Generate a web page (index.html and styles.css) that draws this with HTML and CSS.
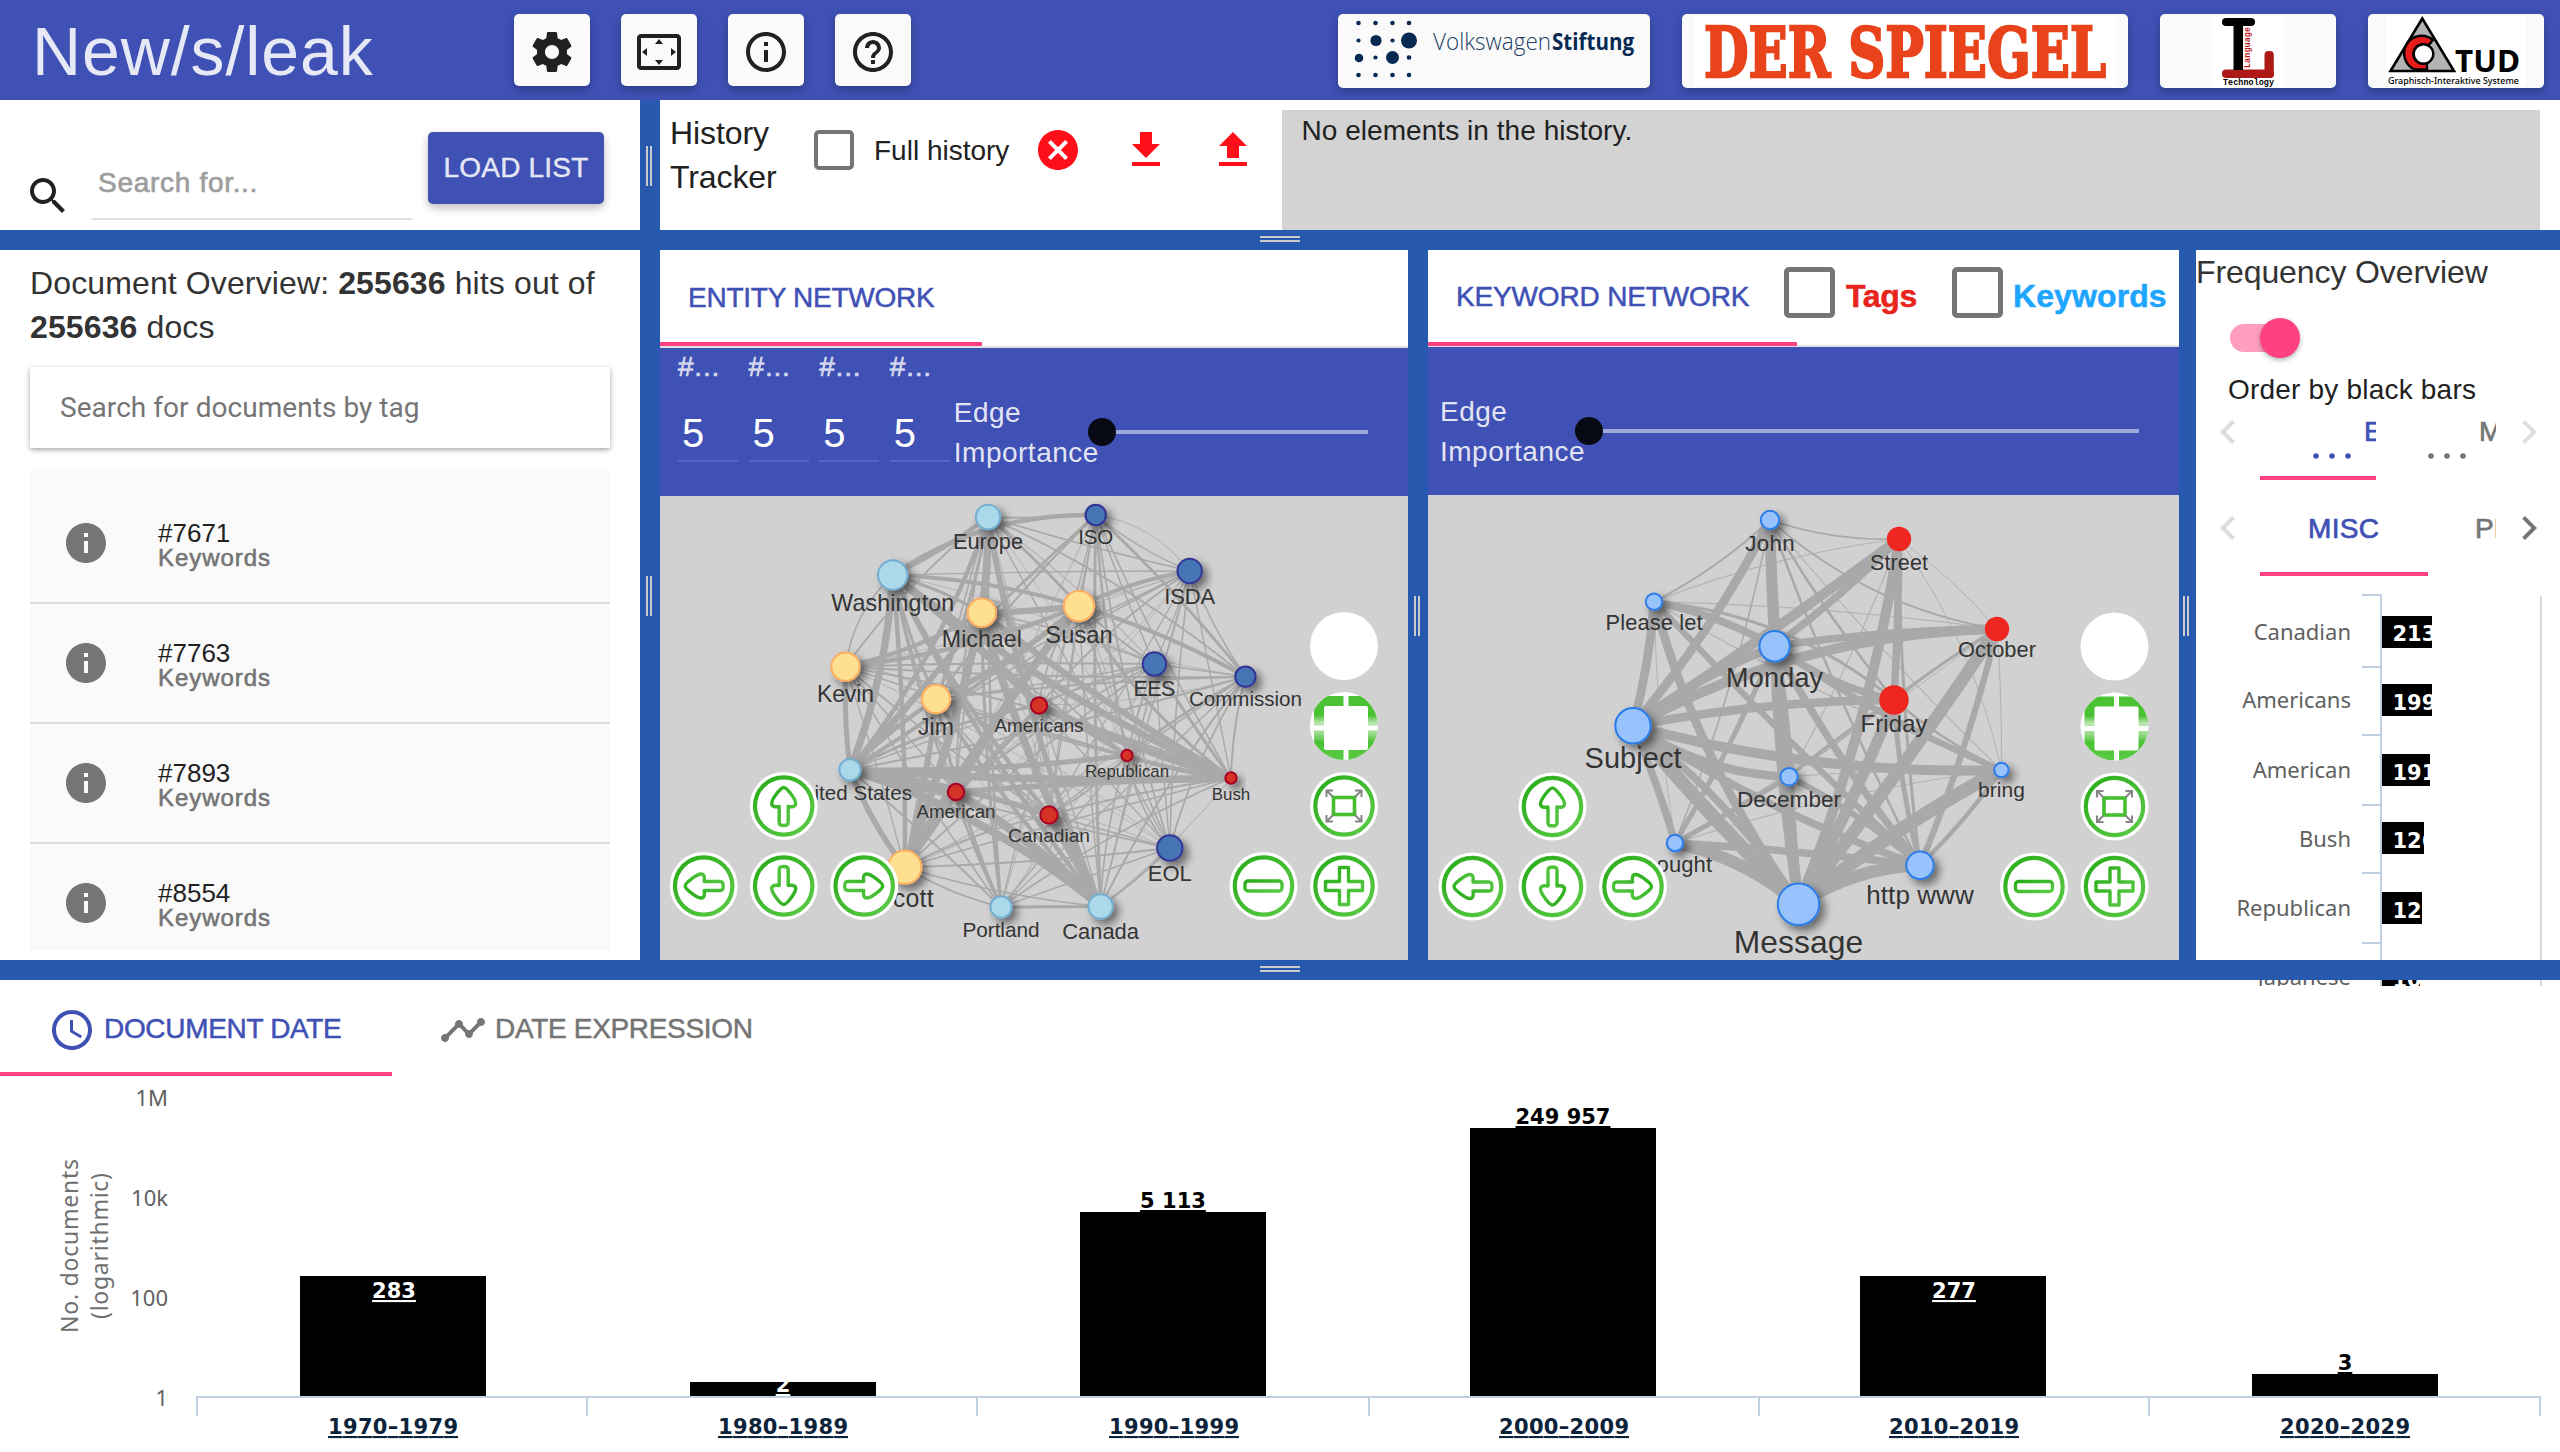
FILE: index.html
```html
<!DOCTYPE html>
<html lang="en">
<head>
<meta charset="utf-8">
<title>New/s/leak</title>
<link rel="stylesheet" href="styles.css">
</head>
<body>
<svg class="sprite" aria-hidden="true">
  <defs>
    <linearGradient id="green" x1="0" y1="0" x2="1" y2="1"><stop offset="0" stop-color="#28ac18"/><stop offset="1" stop-color="#5ccb48"/></linearGradient>
    <linearGradient id="greenFade" x1="0" y1="0" x2="0" y2="1"><stop offset="0" stop-color="#4cc235"/><stop offset="0.3" stop-color="#49c132"/><stop offset="0.42" stop-color="#b9e6b0"/><stop offset="0.58" stop-color="#9ddc90"/><stop offset="0.72" stop-color="#49c132"/><stop offset="1" stop-color="#5ccb48"/></linearGradient>
    <clipPath id="disc"><circle r="34"/></clipPath>
    <filter id="shadow" x="-60%" y="-60%" width="240%" height="240%"><feDropShadow dx="5" dy="5" stdDeviation="4" flood-color="#000" flood-opacity="0.5"/></filter>
    <g id="ring"><circle r="34" fill="#fff"/><circle r="28.7" fill="#fff" stroke="url(#green)" stroke-width="4.2"/></g>
    <path id="arrow" d="M0-18.5C3-18.5 12-7 12-2.500C12 1 8 1 4.500 0.500V16.500Q4.500 19.500 0 19.500T-4.500 16.500V0.500C-8 1-12 1-12-2.500C-12-7-3-18.500 0-18.500Z" fill="#fff" stroke="url(#green)" stroke-width="3.4" stroke-linejoin="round"/>
    <g id="navUp"><use href="#ring"/><use href="#arrow"/></g>
    <g id="navDown"><use href="#ring"/><use href="#arrow" transform="rotate(180)"/></g>
    <g id="navLeft"><use href="#ring"/><use href="#arrow" transform="rotate(-90)"/></g>
    <g id="navRight"><use href="#ring"/><use href="#arrow" transform="rotate(90)"/></g>
    <g id="navMinus"><use href="#ring"/><rect x="-18.500" y="-5" width="37" height="10" rx="3" fill="#fff" stroke="url(#green)" stroke-width="3.4"/></g>
    <g id="navPlus"><use href="#ring"/><path d="M-4.500-18.500H4.500V-4.500H18.500V4.500H4.500V18.500H-4.500V4.500H-18.500V-4.500H-4.500Z" fill="#fff" stroke="url(#green)" stroke-width="3.400" stroke-linejoin="round"/></g>
    <g id="navFit"><use href="#ring"/><rect x="-10.500" y="-8.500" width="21" height="17" fill="none" stroke="#45bf30" stroke-width="3.600"/><path d="M-11-9L-17-15M-17.500-9V-15.500H-11M11-9L17-15M17.500-9V-15.500H11M-11 9L-17 15M-17.500 9V15.500H-11M11 9L17 15M17.500 9V15.500H11" fill="none" stroke="#858585" stroke-width="2"/></g>
    <g id="navFrame"><circle r="34" fill="#fff"/><g clip-path="url(#disc)"><rect x="-30" y="-30" width="64" height="64" fill="url(#greenFade)"/><rect x="-20" y="-20" width="44" height="44" rx="2" fill="#fff"/><path d="M2-34V36M-34 2H36" stroke="#fff" stroke-width="5"/></g></g>
    <path id="icInfo" d="M12 2C6.480 2 2 6.480 2 12s4.480 10 10 10 10-4.480 10-10S17.520 2 12 2zm1 15h-2v-6h2v6zm0-8h-2V7h2v2z"/>
    <path id="icLeft" d="M15.410 7.410L14 6l-6 6 6 6 1.410-1.410L10.830 12z"/>
    <path id="icRight" d="M10 6L8.590 7.410 13.170 12l-4.580 4.590L10 18l6-6z"/>
  </defs>
</svg>

<div class="app">
  <header class="topbar">
    <h1 class="brand">New/s/leak</h1>
    <nav class="tools">
      <button class="tool"><svg class="icon" viewBox="0 0 24 24"><path d="M19.430 12.980c.04-.32.07-.64.07-.98s-.03-.66-.07-.98l2.110-1.650c.19-.15.24-.42.12-.64l-2-3.460c-.12-.22-.39-.3-.61-.22l-2.490 1c-.52-.4-1.080-.73-1.690-.98l-.38-2.650C14.460 2.180 14.250 2 14 2h-4c-.25 0-.46.18-.49.42l-.38 2.650c-.61.25-1.170.59-1.690.98l-2.490-1c-.23-.09-.49 0-.61.22l-2 3.460c-.13.22-.07.49.12.64l2.110 1.650c-.04.32-.07.65-.07.98s.03.66.07.98l-2.110 1.650c-.19.15-.24.42-.12.64l2 3.460c.12.22.39.3.61.22l2.490-1c.52.4 1.080.73 1.690.98l.38 2.650c.03.24.24.42.49.42h4c.25 0 .46-.18.49-.42l.38-2.650c.61-.25 1.170-.59 1.690-.98l2.490 1c.23.09.49 0 .61-.22l2-3.460c.12-.22.07-.49-.12-.64l-2.110-1.650zM12 15.500c-1.930 0-3.500-1.570-3.500-3.500s1.570-3.500 3.500-3.500 3.500 1.570 3.500 3.500-1.570 3.500-3.500 3.500z"/></svg></button>
      <button class="tool"><svg class="icon" viewBox="0 0 24 24"><path d="M12.010 5.500L10 8h4l-1.990-2.500zM18 10v4l2.500-1.990L18 10zM6 10l-2.500 2.010L6 14v-4zm8 6h-4l2.010 2.500L14 16zm7-13H3c-1.100 0-2 .9-2 2v14c0 1.100.9 2 2 2h18c1.100 0 2-.9 2-2V5c0-1.100-.9-2-2-2zm0 16.010H3V4.990h18v14.020z"/></svg></button>
      <button class="tool"><svg class="icon" viewBox="0 0 24 24"><path d="M11 17h2v-6h-2v6zm1-15C6.480 2 2 6.480 2 12s4.480 10 10 10 10-4.480 10-10S17.520 2 12 2zm0 18c-4.410 0-8-3.590-8-8s3.590-8 8-8 8 3.590 8 8-3.590 8-8 8zM11 9h2V7h-2v2z"/></svg></button>
      <button class="tool"><svg class="icon" viewBox="0 0 24 24"><path d="M11 18h2v-2h-2v2zm1-16C6.480 2 2 6.480 2 12s4.480 10 10 10 10-4.480 10-10S17.520 2 12 2zm0 18c-4.410 0-8-3.590-8-8s3.590-8 8-8 8 3.590 8 8-3.590 8-8 8zm0-14c-2.210 0-4 1.790-4 4h2c0-1.100.9-2 2-2s2 .9 2 2c0 2-3 1.750-3 5h2c0-2.250 3-2.500 3-5 0-2.210-1.790-4-4-4z"/></svg></button>
    </nav>
    <div class="sponsors">
      <svg class="sponsor" width="312" height="74" viewBox="1338 14 312 74">
        <g fill="#062a52"><circle cx="1358.500" cy="23" r="2.300"/><circle cx="1375.500" cy="23" r="2.300"/><circle cx="1392.500" cy="23" r="2.300"/><circle cx="1409" cy="23" r="2.300"/><circle cx="1358.500" cy="40.500" r="2.100"/><circle cx="1376" cy="40.500" r="5.600"/><circle cx="1392.500" cy="40.500" r="2.100"/><circle cx="1409" cy="40.500" r="8"/><circle cx="1359" cy="58" r="4.300"/><circle cx="1375.500" cy="57.500" r="2.100"/><circle cx="1392.500" cy="57.500" r="6.500"/><circle cx="1409" cy="57.500" r="2.300"/><circle cx="1358.500" cy="75" r="2.300"/><circle cx="1375.500" cy="75" r="2.300"/><circle cx="1392.500" cy="75" r="2.300"/><circle cx="1409" cy="75" r="2.300"/></g>
        <text class="vw" x="1433" y="49.500" textLength="118" lengthAdjust="spacingAndGlyphs">Volkswagen</text>
        <text class="vw vw-bold" x="1552" y="49.500" textLength="82" lengthAdjust="spacingAndGlyphs">Stiftung</text>
      </svg>
      <svg class="sponsor" width="446" height="74" viewBox="1682 14 446 74"><rect x="1694" y="16" width="422" height="70" fill="#fff"/><text class="spiegel" x="1704" y="76.500" textLength="402" lengthAdjust="spacingAndGlyphs">DER SPIEGEL</text></svg>
      <svg class="sponsor" width="176" height="74" viewBox="2160 14 176 74">
        <rect x="2212" y="16" width="72" height="72" fill="#fff"/>
        <rect x="2222" y="69.500" width="52" height="8.500" rx="4" fill="#ae1a16"/><rect x="2264.500" y="51" width="9.300" height="27" rx="4" fill="#ae1a16"/>
        <rect x="2222" y="18" width="33" height="8" rx="4" fill="#000"/><rect x="2233.500" y="20" width="9.500" height="50" fill="#000"/>
        <text class="lt" x="2223" y="84.500" textLength="51">Technology</text>
        <text class="lt lt-red" transform="translate(2249.500 68) rotate(-90)" textLength="41">Language</text>
      </svg>
      <svg class="sponsor" width="176" height="74" viewBox="2368 14 176 74">
        <rect x="2386" y="16" width="140" height="70" fill="#fff"/>
        <path d="M2422.300 18.500L2390.500 71H2454Z" fill="#b3b3b3" stroke="#000" stroke-width="2.600"/>
        <path d="M2433 40A17.500 17.500 0 1 0 2415 69.500H2427V62.500A9.500 9.500 0 1 1 2428 46Z" fill="#e81b1b" stroke="#000" stroke-width="2.400"/>
        <circle cx="2423.500" cy="54" r="9.800" fill="#fff" stroke="#000" stroke-width="2.400"/>
        <text class="tud" x="2455" y="72" textLength="65" lengthAdjust="spacingAndGlyphs">TUD</text>
        <text class="tud-sub" x="2388" y="83.500" textLength="131" lengthAdjust="spacingAndGlyphs">Graphisch-Interaktive Systeme</text>
      </svg>
    </div>
  </header>

  <div class="row row-search">
    <section class="search">
      <svg class="icon search-icon" viewBox="0 0 24 24"><path d="M15.500 14h-.79l-.28-.27C15.410 12.590 16 11.110 16 9.500 16 5.910 13.090 3 9.500 3S3 5.910 3 9.500 5.910 16 9.500 16c1.610 0 3.090-.59 4.230-1.570l.27.28v.79l5 4.990L20.490 19l-4.990-5zm-6 0C7.010 14 5 11.990 5 9.500S7.010 5 9.500 5 14 7.010 14 9.500 11.990 14 9.500 14z"/></svg>
      <div class="search-field">Search for...</div>
      <button class="load">LOAD LIST</button>
    </section>
    <div class="split-v"><i class="grip-v"></i></div>
    <section class="history">
      <h2 class="history-title">History Tracker</h2>
      <span class="checkbox"></span>
      <span class="history-label">Full history</span>
      <svg class="icon red" viewBox="0 0 24 24"><path d="M12 2C6.470 2 2 6.470 2 12s4.470 10 10 10 10-4.470 10-10S17.530 2 12 2zm5 13.590L15.590 17 12 13.410 8.410 17 7 15.590 10.590 12 7 8.410 8.410 7 12 10.590 15.590 7 17 8.410 13.410 12 17 15.590z"/></svg>
      <svg class="icon red" viewBox="0 0 24 24"><path d="M19 9h-4V3H9v6H5l7 7 7-7zM5 18v2h14v-2H5z"/></svg>
      <svg class="icon red" viewBox="0 0 24 24"><path d="M9 16h6v-6h4l-7-7-7 7h4zm-4 2h14v2H5z"/></svg>
      <div class="history-list">No elements in the history.</div>
    </section>
  </div>

  <div class="split-h"><i class="grip-h"></i></div>

  <div class="row row-main">
    <section class="docs">
      <h2 class="docs-title">Document Overview: <b>255636</b> hits out of <b>255636</b> docs</h2>
      <div class="tag-search">Search for documents by tag</div>
      <ul class="doc-list">
        <li><svg class="icon" viewBox="0 0 24 24"><use href="#icInfo"/></svg><div><p>#7671</p><small>Keywords</small></div></li>
        <li><svg class="icon" viewBox="0 0 24 24"><use href="#icInfo"/></svg><div><p>#7763</p><small>Keywords</small></div></li>
        <li><svg class="icon" viewBox="0 0 24 24"><use href="#icInfo"/></svg><div><p>#7893</p><small>Keywords</small></div></li>
        <li><svg class="icon" viewBox="0 0 24 24"><use href="#icInfo"/></svg><div><p>#8554</p><small>Keywords</small></div></li>
      </ul>
    </section>
    <div class="split-v split-docs"><i class="grip-v"></i></div>

    <section class="network">
      <div class="net-tabs"><div class="net-tab tab-entity">ENTITY NETWORK</div></div>
      <div class="net-bar">
        <div class="count"><label>#...</label><span>5</span></div>
        <div class="count"><label>#...</label><span>5</span></div>
        <div class="count"><label>#...</label><span>5</span></div>
        <div class="count"><label>#...</label><span>5</span></div>
        <div class="edge-label">Edge Importance</div>
        <div class="slider slider-entity"><i></i></div>
      </div>
      <svg class="graph" id="entityGraph" viewBox="660 496 748 464"></svg>
    </section>
    <div class="split-v split-net"><i class="grip-v"></i></div>

    <section class="network keyword">
      <div class="net-tabs">
        <div class="net-tab tab-keyword">KEYWORD NETWORK</div>
        <span class="checkbox big first"></span><b class="tags">Tags</b>
        <span class="checkbox big second"></span><b class="keywords">Keywords</b>
      </div>
      <div class="net-bar">
        <div class="edge-label edge-keyword">Edge Importance</div>
        <div class="slider slider-keyword"><i></i></div>
      </div>
      <svg class="graph" id="keywordGraph" viewBox="1428 495 751 465"></svg>
    </section>
    <div class="split-v split-freq"><i class="grip-v"></i></div>

    <section class="freq">
      <h2 class="freq-title">Frequency Overview</h2>
      <div class="toggle"><i></i></div>
      <div class="toggle-label">Order by black bars</div>
      <div class="pager">
        <svg class="icon faint" viewBox="0 0 24 24"><use href="#icLeft"/></svg>
        <svg class="pager-tabs" width="236" height="80" viewBox="2260 400 236 80">
          <text class="tab-on" x="2364" y="441">E</text><text class="tab-off" x="2479" y="441">M</text>
          <rect x="2376" y="415" width="10" height="30" fill="#fff"/>
          <g fill="#3f51b5"><circle cx="2316" cy="456" r="2.800"/><circle cx="2332" cy="456" r="2.800"/><circle cx="2348" cy="456" r="2.800"/></g>
          <g fill="#757575"><circle cx="2431" cy="456" r="2.800"/><circle cx="2447" cy="456" r="2.800"/><circle cx="2463" cy="456" r="2.800"/></g>
          <rect x="2260" y="476" width="116" height="4" fill="#ff4081"/>
        </svg>
        <svg class="icon faint" viewBox="0 0 24 24"><use href="#icRight"/></svg>
      </div>
      <div class="pager">
        <svg class="icon faint" viewBox="0 0 24 24"><use href="#icLeft"/></svg>
        <svg class="pager-tabs" width="236" height="80" viewBox="2260 496 236 80">
          <text class="tab-on" x="2308" y="538" textLength="71">MISC</text><text class="tab-off" x="2475" y="538">PE</text>
          <rect x="2260" y="572" width="168" height="4" fill="#ff4081"/>
        </svg>
        <svg class="icon" viewBox="0 0 24 24"><use href="#icRight"/></svg>
      </div>
      <svg class="freq-chart" width="364" height="394" viewBox="2196 592 364 394">
        <path d="M2362 595H2382M2362 667H2382M2362 735H2382M2362 805H2382M2362 873H2382M2362 943H2382" stroke="#c0d0e0" stroke-width="2"/>
        <path d="M2381 594V986" stroke="#c0d0e0" stroke-width="2"/><path d="M2541 596V986" stroke="#d8d8d8" stroke-width="2"/>
        <path d="M2382 616h50v32h-50zM2382 684h50v32h-50zM2382 754h48v32h-48zM2382 822h42v32h-42zM2382 892h40v32h-40zM2382 962h38v24h-38z"/>
        <g class="axis end"><text x="2351" y="640">Canadian</text><text x="2351" y="708">Americans</text><text x="2351" y="778">American</text><text x="2351" y="846.500">Bush</text><text x="2351" y="916">Republican</text><text x="2351" y="985">Japanese</text></g>
      </svg>
    </section>
  </div>

  <div class="split-h"><i class="grip-h"></i></div>

  <section class="timeline">
    <div class="time-tabs">
      <div class="time-tab active"><svg class="icon" viewBox="0 0 24 24"><path d="M11.990 2C6.470 2 2 6.480 2 12s4.470 10 9.990 10C17.520 22 22 17.520 22 12S17.520 2 11.990 2zM12 20c-4.420 0-8-3.580-8-8s3.580-8 8-8 8 3.580 8 8-3.580 8-8 8zM12.500 7H11v6l5.250 3.150.75-1.230-4.500-2.670z"/></svg><span>DOCUMENT DATE</span></div>
      <div class="time-tab"><svg class="icon" viewBox="0 0 24 24"><path d="M23 8c0 1.100-.9 2-2 2-.18 0-.35-.02-.51-.07l-3.560 3.550c.05.16.07.34.07.52 0 1.100-.9 2-2 2s-2-.9-2-2c0-.18.02-.36.07-.52l-2.550-2.550c-.16.05-.34.07-.52.07s-.36-.02-.52-.07l-4.550 4.560c.05.16.07.33.07.51 0 1.100-.9 2-2 2s-2-.9-2-2 .9-2 2-2c.18 0 .35.02.51.07l4.560-4.550C8.020 9.360 8 9.180 8 9c0-1.100.9-2 2-2s2 .9 2 2c0 .18-.02.36-.07.52l2.550 2.550c.16-.05.34-.07.52-.07s.36.02.52.07l3.550-3.560C19.020 8.350 19 8.180 19 8c0-1.100.9-2 2-2s2 .9 2 2z"/></svg><span>DATE EXPRESSION</span></div>
    </div>
    <svg class="time-chart" width="2560" height="376" viewBox="0 1076 2560 376">
      <g class="axis end"><text x="168" y="1106">1M</text><text x="168" y="1206">10k</text><text x="168" y="1306">100</text><text x="168" y="1406">1</text></g>
      <g class="axis title"><text transform="translate(78 1246) rotate(-90)" textLength="174">No. documents</text><text transform="translate(107.500 1246) rotate(-90)" textLength="146">(logarithmic)</text></g>
      <path d="M300 1276h186v120h-186zM690 1382h186v14h-186zM1080 1212h186v184h-186zM1470 1128h186v268h-186zM1860 1276h186v120h-186zM2252 1374h186v22h-186z"/>
      <path d="M196 1397H2541M197 1397V1416M587 1397V1416M977 1397V1416M1369 1397V1416M1759 1397V1416M2149 1397V1416M2540 1397V1416" stroke="#c0d0e0" stroke-width="2"/>
      <clipPath id="bar2"><rect x="690" y="1382" width="186" height="14"/></clipPath>
      <g class="value in"><text x="394" y="1298">283</text><text x="783" y="1392" clip-path="url(#bar2)">2</text><text x="1954" y="1298">277</text></g>
      <g class="value"><text x="1173" y="1208">5 113</text><text x="1563" y="1124">249 957</text><text x="2345" y="1370">3</text></g>
      <g class="value cat"><text x="393" y="1434" textLength="130">1970–1979</text><text x="783" y="1434" textLength="130">1980–1989</text><text x="1174" y="1434" textLength="130">1990–1999</text><text x="1564" y="1434" textLength="130">2000–2009</text><text x="1954" y="1434" textLength="130">2010–2019</text><text x="2345" y="1434" textLength="130">2020–2029</text></g>
    </svg>
  </section>
</div>
<script src="graph.js"></script>
</body>
</html>
```
FILE: styles.css
```css
* { box-sizing: border-box; }
body { margin: 0; background: #fff; font-family: "Liberation Sans", Arial, sans-serif; color: #212121; }
h1, h2, p, ul { margin: 0; padding: 0; font-weight: 400; list-style: none; }
button { border: 0; padding: 0; font: inherit; }
.sprite { position: absolute; width: 0; height: 0; }
.icon { width: 48px; height: 48px; fill: currentColor; flex: none; display: block; }
.app { width: 2560px; height: 1452px; overflow: hidden; display: grid; grid-template-rows: 100px 130px 20px 710px 20px 472px; }

.topbar { background: #3f51b5; display: flex; align-items: flex-start; padding: 14px 16px 0 32px; }
.brand { width: 482px; font-size: 68px; line-height: 74px; letter-spacing: .9px; color: rgba(255,255,255,.87); }
.tools { display: flex; gap: 31px; }
.tool { width: 76px; height: 72px; border-radius: 5px; background: #fafafa; color: #212121; display: grid; place-items: center; padding-top: 4px; box-shadow: 0 4px 10px rgba(0,0,0,.26); }
.sponsors { margin-left: auto; display: flex; gap: 32px; }
.sponsor { display: block; background: #fafafa; border-radius: 5px; box-shadow: 0 4px 10px rgba(0,0,0,.26); }
.vw { font: 300 24px "Open Sans", sans-serif; fill: #1c3f66; }
.vw-bold { font-weight: 700; fill: #062a52; }
.spiegel { font: 700 69px "DejaVu Serif", serif; fill: #e8431a; stroke: #e8431a; stroke-width: 2.5px; }
.lt { font: 700 8.400px "Liberation Mono", monospace; }
.lt-red { fill: #c0201c; }
.tud { font: 700 30px "Noto Sans", sans-serif; }
.tud-sub { font: 500 9.500px "Noto Sans", sans-serif; }

.row { display: flex; min-height: 0; }
.split-v { width: 20px; flex: none; background: #275aaf; display: flex; justify-content: center; padding: 46px 2px 0 0; }
.grip-v { width: 6px; height: 40px; border: solid #ccc; border-width: 0 2px; }
.split-h { position: relative; z-index: 2; background: #275aaf; display: flex; justify-content: center; align-items: flex-start; padding-top: 6px; }
.grip-h { width: 40px; height: 6px; border: solid #ccc; border-width: 2px 0; }

.search { width: 640px; display: flex; padding: 32px 36px 0 24px; }
.search-icon { margin-top: 40px; }
.search-field { width: 320px; height: 88px; margin: 0 16px 0 20px; padding: 35px 0 0 6px; border-bottom: 2px solid #e0e0e0; font-size: 28px; line-height: 32px; letter-spacing: .7px; color: #9e9e9e; -webkit-text-stroke: .7px #9e9e9e; }
.load { width: 176px; height: 72px; border-radius: 5px; background: #3f51b5; color: rgba(255,255,255,.87); font-size: 28px; letter-spacing: .2px; white-space: nowrap; -webkit-text-stroke: .4px; box-shadow: 0 4px 10px rgba(0,0,0,.26); }

.history { flex: 1; display: flex; padding: 10px 20px 0 10px; }
.history-title { width: 144px; margin-top: 1px; font-size: 32px; line-height: 44px; letter-spacing: -.1px; }
.checkbox { width: 40px; height: 40px; margin-top: 20px; border: 4px solid #757575; border-radius: 5px; flex: none; }
.history-label { width: 160px; margin: 25px 0 0 20px; font-size: 28px; line-height: 32px; white-space: nowrap; }
.history .red { color: #ff0f1a; margin: 16px 39.500px 0 0; }
.history-list { flex: 1; margin-left: -15px; background: #d3d3d3; padding: 5px 20px; font-size: 28px; line-height: 32px; letter-spacing: .05px; }

.docs { width: 640px; padding: 22px 30px 0; overflow: hidden; }
.docs-title { font-size: 32px; line-height: 44px; letter-spacing: .12px; color: #333; white-space: normal; margin-top: -11px; }
.tag-search { height: 81px; margin-top: 18px; padding: 0 30px; font: 28px/81px Roboto, sans-serif; letter-spacing: .05px; color: #757575; box-shadow: 0 2px 5px rgba(0,0,0,.35); }
.doc-list { height: 482px; margin-top: 20px; padding-top: 16px; background: #fafafa; overflow: hidden; }
.doc-list li { height: 120px; display: flex; align-items: center; padding-left: 32px; gap: 48px; color: #757575; border-bottom: 2px solid #ddd; }
.doc-list li > div { padding-top: 5px; }
.doc-list p { font-size: 26px; line-height: 26px; color: #212121; margin-top: -1px; }
.doc-list small { display: block; font-size: 24px; line-height: 24px; letter-spacing: .95px; -webkit-text-stroke: .6px #757575; }
.split-docs { padding-top: 326px; }
.split-net { padding-top: 346px; padding-right: 2px; }
.split-freq { width: 17px; padding-top: 346px; padding-right: 3px; }

.network { width: 748px; display: flex; flex-direction: column; }
.keyword { width: 751px; margin-top: -1px; position: relative; }
.net-tabs { height: 98px; display: flex; border-bottom: 2px solid #e0e0e0; background: #fff; }
.net-tab { border-bottom: 4px solid #ff4081; padding-left: 28px; font-size: 28px; line-height: 96px; letter-spacing: -.25px; color: #3f51b5; white-space: nowrap; -webkit-text-stroke: .5px #3f51b5; }
.tab-entity { width: 322px; }
.tab-keyword { width: 369px; height: 97px; letter-spacing: -.15px; }
.checkbox.big { width: 51px; height: 51px; border-width: 5px; margin-top: 18px; }
.checkbox.first { margin-left: -13px; }
.checkbox.second { margin-left: 34px; }
.tags, .keywords { font-size: 32px; line-height: 95px; letter-spacing: -.3px; margin-left: 11px; width: 72px; color: #e8251d; -webkit-text-stroke: .5px; }
.keywords { color: #1ea5ff; margin-left: 10px; width: auto; letter-spacing: .1px; }
.net-bar { height: 148px; background: #3f51b5; color: rgba(255,255,255,.87); display: flex; padding-left: 18px; }
.count { width: 60px; margin-right: 10.600px; height: 114px; border-bottom: 2px solid rgba(255,255,255,.12); }
.count label { display: block; font: 400 28px/32px "Liberation Sans", sans-serif; color: rgba(255,255,255,.7); margin: 3px 0 0; letter-spacing: .8px; -webkit-text-stroke: .7px rgba(255,255,255,.7); }
.count span { display: block; margin: 24px 0 0 4px; font: 40px/52px "Liberation Sans", sans-serif; letter-spacing: 0; color: #fff; }
.edge-label { width: 148px; margin: 45px 0 0 -6.600px; font-size: 28px; line-height: 40px; letter-spacing: .5px; flex: none; }
.edge-keyword { margin-left: -6px; width: 149px; }
.slider { position: relative; height: 4px; margin-top: 82px; background: #9fa8da; }
.slider i { position: absolute; left: -14px; top: -12px; width: 28px; height: 28px; border-radius: 50%; background: #070915; }
.slider-entity { width: 266px; }
.slider-keyword { width: 550px; }
.graph { flex: 1; min-height: 0; width: 100%; background: #d1d1d1; display: block; font-family: "Liberation Sans", Arial, sans-serif; }

.freq { width: 364px; position: relative; }
.freq-title { font-size: 32px; line-height: 44px; height: 67px; letter-spacing: -.1px; color: #333; }
.toggle { position: relative; width: 56px; height: 28px; margin: 7px 0 0 34px; border-radius: 14px; background: #ff9ebe; }
.toggle i { position: absolute; left: 30px; top: -6px; width: 40px; height: 40px; border-radius: 50%; background: #ff4081; box-shadow: 0 2px 5px rgba(0,0,0,.3); }
.toggle-label { margin: 22px 0 0 32px; font-size: 28px; line-height: 32px; letter-spacing: .2px; height: 26px; }
.pager { height: 96px; display: flex; color: #757575; }
.pager .icon { margin: 8px 8px 0; }
.pager .faint { color: #ddd; }
.pager-tabs { display: block; flex: none; }
.pager .icon:last-child { margin-left: 9px; }
.tab-on, .tab-off { font-size: 28px; fill: #3f51b5; stroke: #3f51b5; stroke-width: .7px; }
.tab-off { fill: #757575; stroke: #757575; }
.freq-chart { display: block; }
.axis { font: 22px "Noto Sans", sans-serif; fill: #606060; }
.axis.end { text-anchor: end; }
.axis.title { fill: #707070; font-size: 23px; text-anchor: middle; }
.bar-value { font: 700 21px "DejaVu Sans", sans-serif; fill: #fff; }

.timeline { min-height: 0; }
.time-tabs { height: 96px; display: flex; }
.time-tab { display: flex; align-items: center; gap: 8px; padding: 4px 47px 0; font-size: 28px; color: #757575; white-space: nowrap; -webkit-text-stroke: .5px; letter-spacing: -.32px; }
.time-tab span { margin-top: -3px; }
.time-tab.active { width: 392px; padding-left: 48px; color: #3f51b5; border-bottom: 4px solid #ff4081; padding-top: 8px; }
.time-chart { display: block; }
.value { font: 700 21px "DejaVu Sans", sans-serif; text-anchor: middle; text-decoration: underline; fill: #000; }
.value.in { fill: #fff; }
.value.cat { fill: #0d233a; }
```
FILE: graph.js
```javascript
const NS = 'http://www.w3.org/2000/svg';

function make(parent, tag, attrs, text) {
  const el = document.createElementNS(NS, tag);
  for (const k in attrs) el.setAttribute(k, attrs[k]);
  if (text) el.textContent = text;
  parent.appendChild(el);
  return el;
}

const palette = {
  loc: ['#abd9e9', '#74add1'], org: ['#4575b4', '#313695'],
  per: ['#fee090', '#fdae61'], misc: ['#d73027', '#a50026'],
  key: ['#97c2fc', '#2b7ce9'], tag: ['#ee2720', '#ee2720']
};

// nodes: id -> [label, x, y, radius, type, label width, label baseline, font size]
// edges: [from, to, width, bend]
function draw(id, nodes, edges, nav) {
  const svg = document.getElementById(id);
  for (const [a, b, w, bend] of edges) {
    const [, x1, y1] = nodes[a], [, x2, y2] = nodes[b];
    const dx = x2 - x1, dy = y2 - y1, len = Math.hypot(dx, dy);
    const cx = (x1 + x2) / 2 - dy / len * bend, cy = (y1 + y2) / 2 + dx / len * bend;
    make(svg, 'path', {
      d: `M${x1} ${y1}Q${cx.toFixed(1)} ${cy.toFixed(1)} ${x2} ${y2}`,
      fill: 'none', stroke: '#a9a9a9', 'stroke-width': w > 3 ? w * nav.weight : w, 'stroke-opacity': w < 1.3 ? 0.75 : 1
    });
  }
  for (const n of Object.values(nodes)) {
    const [label, x, y, r, type, lw, ly, fs] = n;
    const [fill, stroke] = palette[type];
    make(svg, 'circle', {
      cx: x, cy: y, r: r - 0.8, fill, stroke, 'stroke-width': 2,
      ...(type === 'tag' ? {} : { filter: 'url(#shadow)' })
    });
    make(svg, 'text', { x, y: ly, 'font-size': fs, 'text-anchor': 'middle', fill: '#343434', textLength: lw }, label);
  }
  const L = nav.left, R = nav.right, y = nav.y;
  [['navUp', L + 80, y - 80], ['navLeft', L, y], ['navDown', L + 80, y], ['navRight', L + 160.500, y],
   ['navMinus', R - 80.500, y], ['navPlus', R, y], ['navFit', R, y - 80], ['navFrame', R, y - 160]]
    .forEach(([ref, px, py]) => make(svg, 'use', { href: '#' + ref, transform: `translate(${px} ${py})` }));
  make(svg, 'circle', { cx: R, cy: y - 240, r: 34, fill: '#fff' });
}

const entities = {
  EU: ['Europe', 988, 517, 13, 'loc', 70, 549, 21.800], IS: ['ISO', 1095.700, 515, 11, 'org', 35, 544, 20.500],
  WA: ['Washington', 892.700, 575, 15.500, 'loc', 123, 611, 23.200], ID: ['ISDA', 1189.700, 571, 13, 'org', 51, 604, 22],
  KE: ['Kevin', 845.500, 666.700, 15, 'per', 57, 702, 23], EE: ['EES', 1154.400, 664, 12.500, 'org', 42, 695.700, 21.500],
  CO: ['Commission', 1245.400, 676.700, 11, 'org', 113, 706, 20.600], MI: ['Michael', 981.800, 612.700, 15, 'per', 80, 646.700, 23.200],
  SU: ['Susan', 1079, 606, 16, 'per', 67.500, 642.700, 23.700], JI: ['Jim', 936, 699, 15, 'per', 36, 735, 23],
  AS: ['Americans', 1039, 705.500, 9, 'misc', 89, 732.300, 18.800], RE: ['Republican', 1127, 755.500, 6.500, 'misc', 84, 776.700, 16.800],
  BU: ['Bush', 1231, 778, 6.500, 'misc', 38.500, 800, 16.900], US: ['United States', 850, 769.700, 11.500, 'loc', 124, 799.700, 20.600],
  AN: ['American', 956, 792, 9, 'misc', 79, 818, 18.800], CN: ['Canadian', 1049, 815, 9.500, 'misc', 82, 841.700, 19.200],
  EO: ['EOL', 1169.800, 848, 13.500, 'org', 44, 880.700, 22], SC: ['Scott', 904.700, 867.300, 17.500, 'per', 58, 906.700, 25],
  PO: ['Portland', 1001, 907, 11.500, 'loc', 77, 936.700, 20.800], CA: ['Canada', 1100.600, 906.500, 13, 'loc', 76.500, 938.700, 21.900]
};

const entityEdges = [
  ['WA', 'EU', 4, 6], ['WA', 'IS', 4, -34], ['EU', 'IS', 2, 3], ['WA', 'SU', 3.500, -12], ['WA', 'BU', 6, 22], ['WA', 'MI', 3, -6],
  ['WA', 'AS', 7, -6], ['WA', 'CA', 4, 20], ['WA', 'US', 6.500, -16], ['WA', 'SC', 4, -8], ['WA', 'PO', 2.500, 22], ['WA', 'CN', 4, 14],
  ['WA', 'JI', 3, 6], ['MI', 'SU', 5.500, 3], ['MI', 'US', 5, -8], ['MI', 'SC', 7, -10], ['MI', 'CA', 7, 18], ['MI', 'BU', 5.500, 10],
  ['MI', 'KE', 4, -12], ['EU', 'US', 4, -26], ['EU', 'MI', 7, -4], ['EU', 'CA', 5, 24], ['EU', 'SU', 3, -4], ['EU', 'JI', 3, -10],
  ['SU', 'KE', 4, -18], ['SU', 'US', 3.500, -10], ['SU', 'SC', 7, 12], ['SU', 'AN', 5, 8], ['SU', 'CO', 3.500, -10], ['SU', 'JI', 5, -12],
  ['SU', 'BU', 3, 24], ['SU', 'EE', 2, 4], ['KE', 'CO', 2, 8], ['KE', 'EE', 2, -4], ['KE', 'US', 4.500, 4], ['KE', 'BU', 2, -24],
  ['US', 'BU', 6.500, 10], ['US', 'RE', 4.500, 10], ['US', 'AN', 8, 6], ['US', 'CA', 7, -28], ['US', 'CN', 5, -10], ['US', 'AS', 3, -16],
  ['US', 'SC', 5, 8], ['US', 'JI', 4, -6], ['US', 'PO', 2, -4], ['AN', 'BU', 5, -4], ['AN', 'CN', 3, -6], ['AN', 'AS', 3.500, 6],
  ['AS', 'RE', 4, -3], ['AS', 'BU', 7, 8], ['CN', 'CA', 7, -2], ['CN', 'BU', 2, -6], ['RE', 'BU', 4, 6], ['AN', 'CA', 8, -10],
  ['AN', 'SC', 4, -4], ['CN', 'RE', 2, 8], ['ID', 'SU', 3.500, 8], ['IS', 'CO', 3, -8], ['IS', 'RE', 2.500, 8], ['IS', 'CA', 3, 6],
  ['IS', 'US', 2.500, 14], ['IS', 'JI', 2, 10], ['CO', 'US', 2, -10], ['CO', 'JI', 2, 8], ['PO', 'CA', 3, 0], ['EE', 'BU', 3, 3],
  ['EE', 'RE', 2, 3], ['CO', 'RE', 2.500, 6], ['CO', 'BU', 2, 6], ['CO', 'CA', 2, 14], ['EO', 'CA', 2, -4], ['EO', 'SC', 1.800, -6],
  ['JI', 'SC', 4.500, -8], ['JI', 'CA', 3.500, 14], ['JI', 'PO', 3, 12], ['MI', 'PO', 3, 8], ['EU', 'PO', 2.500, 8], ['ID', 'IS', 1.600, -8],
  ['SC', 'PO', 1.600, 8], ['SC', 'CA', 1.600, 10], ['EU', 'CO', 1.800, -20], ['WA', 'KE', 1.600, 18], ['WA', 'ID', 1.300, -2], ['IS', 'ID', 1.200, -22]
];

const seen = new Set(entityEdges.flatMap(([a, b]) => [a + b, b + a]));
const ids = Object.keys(entities);
const faint = [];
ids.forEach((a, i) => ids.slice(i + 1).forEach((b, j) => {
  const h = (i * 7 + j * 13) % 10;
  if (!seen.has(a + b) && h !== 3) faint.push([a, b, 0.9 + h * 0.1, (h - 5) * 3.500]);
}));
draw('entityGraph', entities, faint.concat(entityEdges), { left: 703.700, right: 1344, y: 886, weight: 1.12 });

const keywords = {
  J: ['John', 1770, 520, 10, 'key', 49.500, 550.700, 22.400], S: ['Street', 1899, 539, 12, 'tag', 58, 570, 21.500],
  P: ['Please let', 1654, 601.700, 9, 'key', 97, 630, 21.900], O: ['October', 1997, 629, 12, 'tag', 78, 656.700, 21.800],
  M: ['Monday', 1774.600, 646.300, 16, 'key', 97, 687, 27], U: ['Subject', 1633, 725.700, 18.500, 'key', 97, 768, 29],
  F: ['Friday', 1894, 700, 14.500, 'tag', 67, 732, 23.800], D: ['December', 1789, 776.700, 9.500, 'key', 104, 806.700, 22.600],
  B: ['bring', 2001.400, 770, 8, 'key', 47, 797, 21], T: ['thought', 1675, 843, 9, 'key', 74, 872, 22],
  H: ['http www', 1920, 865.300, 14.500, 'key', 107.500, 903.700, 26], G: ['Message', 1798.500, 904.300, 21.500, 'key', 129.500, 953, 31.800]
};

draw('keywordGraph', keywords, [
  ['J', 'S', 1.800, 12], ['J', 'P', 1.800, -10], ['J', 'O', 2, 36], ['J', 'F', 2.500, 8], ['J', 'H', 2.500, 12], ['J', 'M', 8, 2],
  ['J', 'U', 7, -14], ['J', 'G', 8, 8], ['J', 'T', 1.500, -16], ['J', 'B', 1.200, 10], ['S', 'P', 1.200, 16], ['S', 'O', 1, -8],
  ['S', 'B', 1, -26], ['S', 'F', 6, -2], ['S', 'G', 8, -22], ['S', 'H', 3, 10], ['S', 'U', 8, -4], ['S', 'M', 6, -6], ['S', 'D', 1.200, -10],
  ['P', 'M', 6, -10], ['P', 'F', 3, -40], ['P', 'U', 7, -6], ['P', 'G', 7, 30], ['P', 'H', 5, 6], ['P', 'O', 1.200, -10], ['P', 'B', 1.200, 16],
  ['P', 'T', 1, 8], ['O', 'M', 6, 8], ['O', 'U', 8, 46], ['O', 'G', 10, -6], ['O', 'H', 5, -10], ['O', 'D', 2, 8], ['O', 'F', 3, 5],
  ['O', 'B', 1.200, -3], ['O', 'T', 1, -10], ['M', 'U', 7, 12], ['M', 'F', 6, 14], ['M', 'D', 9, -2], ['M', 'B', 5, 14], ['M', 'G', 8, 8],
  ['M', 'H', 6, 12], ['M', 'T', 4, -8], ['U', 'F', 7, -12], ['U', 'B', 8, 28], ['U', 'D', 7, 24], ['U', 'H', 6, 20], ['U', 'T', 6, -4],
  ['U', 'G', 11, 6], ['U', 'J', 3, 14], ['F', 'G', 9, -8], ['F', 'H', 4, 8], ['F', 'B', 2.500, 8], ['F', 'T', 1.500, -12], ['F', 'D', 3, 4],
  ['D', 'G', 8, 3], ['D', 'H', 5, -10], ['D', 'B', 1.200, -5], ['D', 'T', 4, -2], ['T', 'G', 10, -18], ['T', 'H', 6, -4], ['T', 'B', 1.200, -16],
  ['B', 'G', 11, 12], ['B', 'H', 3.500, -6], ['H', 'G', 10, 18], ['U', 'G', 6, -22]
], { left: 1472.500, right: 2114.500, y: 886.500, weight: 1.25 });

// bar labels are clipped to the width of their bar
const chart = document.querySelector('.freq-chart');
[['213', 641, 50, 616], ['199', 709.500, 50, 684], ['191', 779.500, 48, 754], ['126', 848, 42, 822], ['12', 918, 40, 892], ['10', 987, 38, 962]]
  .forEach(([t, y, w, top]) => {
    const clip = make(chart, 'clipPath', { id: 'c' + top });
    make(clip, 'rect', { x: 2382, y: top, width: w, height: 32 });
    make(chart, 'text', { class: 'bar-value', x: 2392.500, y, 'clip-path': `url(#c${top})` }, t);
  });
```
